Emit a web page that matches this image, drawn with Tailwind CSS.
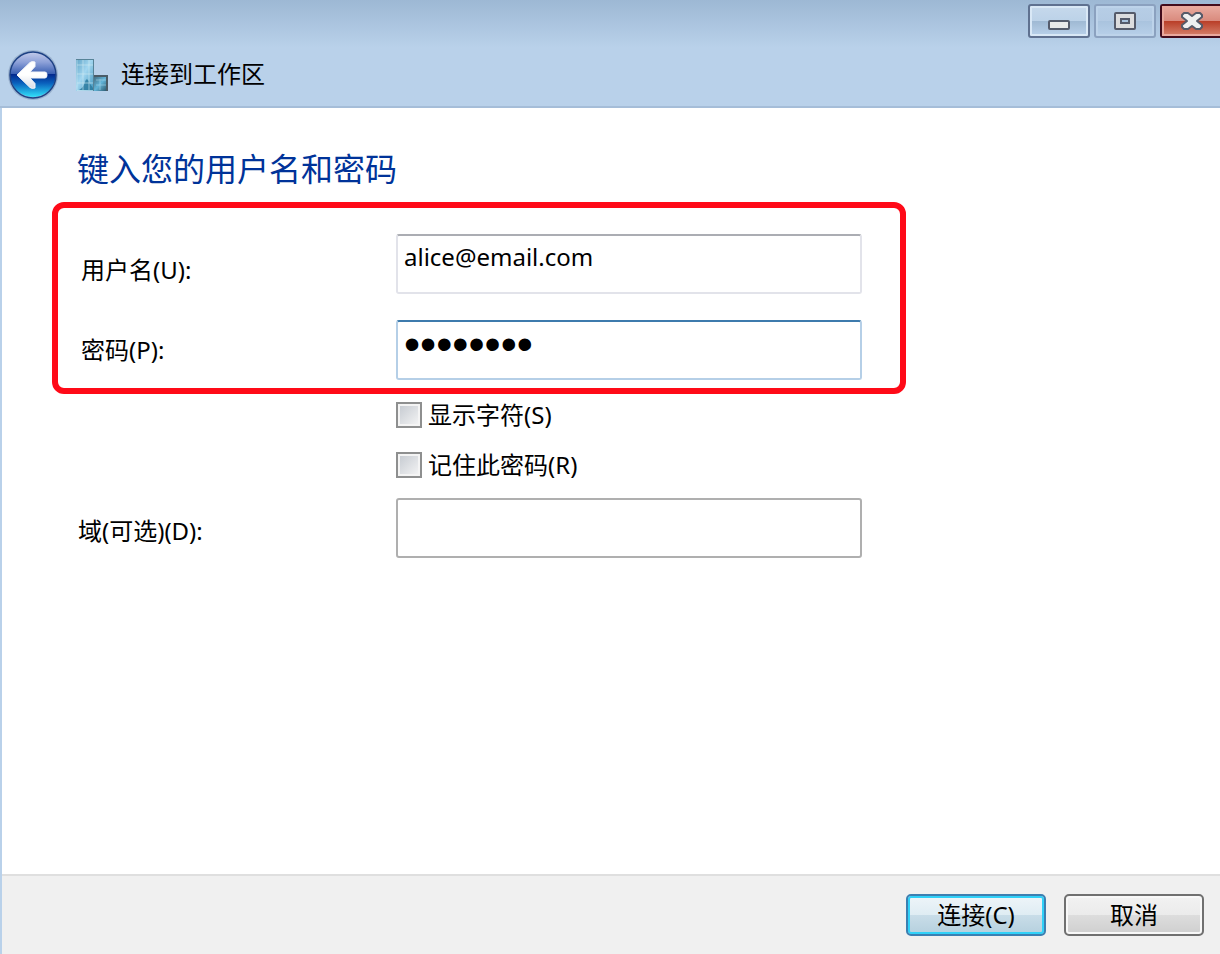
<!DOCTYPE html>
<html lang="zh-CN">
<head>
<meta charset="utf-8">
<title>连接到工作区</title>
<script src="https://cdn.jsdelivr.net/npm/@tailwindcss/browser@4"></script>
</head>
<body class="flex min-h-screen flex-col overflow-x-hidden bg-[#b9d1ea] font-['Noto_Sans','Noto_Sans_CJK_SC',sans-serif] text-2xl leading-8 text-black">

<header class="bg-linear-to-b from-[#9db8d4] to-[#b9d1ea] to-45% border-b-2 border-[#a5bdd8]">
  <div class="flex h-11 justify-end gap-1 pt-1">
    <button aria-label="最小化" class="flex h-[34px] w-[62px] justify-center rounded-[3px] border-2 border-[#5f7190] bg-[linear-gradient(#c6d9ec,#bcd2e8_50%,#9fb9d3_50%,#bad2eb)] inset-ring-2 inset-ring-[#d9e8f6]">
      <svg class="mt-3.5 h-[10px] w-[22px]" viewBox="0 0 22 10"><rect x="1" y="1" width="20" height="8" rx="1" fill="#e9e9e9" stroke="#555b6b" stroke-width="2"/></svg>
    </button>
    <button aria-label="最大化" class="flex h-[34px] w-[62px] justify-center rounded-[3px] border-2 border-[#8ba1bf] bg-[linear-gradient(#b7cee6,#b3cae3_50%,#a9c3de_50%,#b8d0e9)] inset-ring-2 inset-ring-[#bdd3ea]">
      <svg class="mt-1.5 h-[18px] w-[22px]" viewBox="0 0 22 18"><rect x="1" y="1" width="20" height="16" rx="1" fill="#dcdddf" stroke="#555b6b" stroke-width="2"/><rect x="7" y="7" width="8" height="4" fill="#a9c3de" stroke="#555b6b" stroke-width="2"/></svg>
    </button>
    <button aria-label="关闭" class="flex h-[34px] w-[60px] rounded-l-[3px] border-2 border-r-0 border-[#430c1c]">
      <span class="flex h-full w-full justify-center border-2 border-r-0 border-[#e9a89d] bg-[linear-gradient(#e7a79c,#d98a7d_50%,#b93e27_50%,#d27964)]">
        <svg class="mt-1 h-[18px] w-[22px]" viewBox="0 0 22 18"><path d="M3 1h4l4 3 4-3h4l2 2v2l-5 4 5 4v2l-2 2h-4l-4-3-4 3H3l-2-2v-2l5-4-5-4V3z" fill="#eeeff0" stroke="#565a69" stroke-width="2" stroke-linejoin="round"/></svg>
      </span>
    </button>
  </div>
  <div class="flex h-[62px] items-center pl-2">
    <button aria-label="返回" class="size-[50px]">
      <svg viewBox="0 0 50 50" class="size-full">
        <defs>
          <linearGradient id="top" x1="0" y1="0" x2="0" y2="1"><stop offset="0" stop-color="#c3cbea"/><stop offset=".45" stop-color="#8ca0d8"/><stop offset="1" stop-color="#3158ae"/></linearGradient>
          <linearGradient id="low" x1="0" y1="0" x2="0" y2="1"><stop offset="0" stop-color="#02268c"/><stop offset=".4" stop-color="#0a61bd"/><stop offset="1" stop-color="#31e1fb"/></linearGradient>
          <linearGradient id="arrow" x1="0" y1="0" x2="0" y2="1"><stop offset=".5" stop-color="#fff"/><stop offset="1" stop-color="#d9dde6"/></linearGradient>
        </defs>
        <circle cx="25" cy="25" r="25" fill="#8ba4c2" opacity=".7"/>
        <path d="M2 25a23 23 0 0 1 46 0z" fill="url(#top)"/>
        <path d="M2 24a23 23 0 0 0 46 0z" fill="url(#low)"/>
        <circle cx="25" cy="25" r="23" fill="none" stroke="#1d4184" stroke-width="1.500"/>
        <path d="M9 25L22 12.500q2-1.500 5-.5v4.500L22 22h15q2 0 2 3t-2 3H22l5 5.500V38q-3 1-5-.5z" fill="url(#arrow)" stroke="#f4f6fa" stroke-width="1"/>
      </svg>
    </button>
    <svg class="ml-[18px] h-8 w-8" viewBox="0 0 32 32" aria-hidden="true">
      <defs>
        <linearGradient id="glass" x1="0" y1="0" x2="1" y2="1"><stop offset="0" stop-color="#5fa3c6"/><stop offset=".45" stop-color="#a2d6f0"/><stop offset="1" stop-color="#3a93bd"/></linearGradient>
        <linearGradient id="annex" x1="0" y1="0" x2="1" y2="1"><stop offset="0" stop-color="#3f6579"/><stop offset=".5" stop-color="#62b4d8"/><stop offset="1" stop-color="#254f63"/></linearGradient>
      </defs>
      <path d="M0 0h18v32H0z" fill="url(#glass)"/>
      <path d="M3 31q5-3 6-8 1-4 3-2 2 4 5 8v2z" fill="#28789c" opacity=".8"/>
      <path d="M1 0v31.500H18M7 1v30M13 1v30M1 6h16M1 15h16M1 24h16" fill="none" stroke="#d1e9f2" opacity=".6"/>
      <path d="M17.500 0v32M0 .5h18" stroke="#568398"/>
      <path d="M18 16h14v16H18z" fill="url(#annex)"/>
      <path d="M18 17h14M31 16v16" stroke="#4a5c68" stroke-width="2"/>
      <path d="M20 21h10M20 26h10M24 20v11" stroke="#b5e0f2" opacity=".5"/>
    </svg>
    <h1 class="ml-[13px] pb-0.5">连接到工作区</h1>
  </div>
</header>

<form class="flex flex-1 flex-col border-l-2 border-[#b9d1ea] bg-white">
  <main class="flex-1 pl-[50px]">
    <h2 class="mt-10 ml-[25px] text-[32px] leading-[42px] text-[#003399]">键入您的用户名和密码</h2>
    <section class="mt-3 w-[854px] max-w-full rounded-xl border-6 border-[#ff0a18] pt-[26px] pb-2 pl-[23px]">
      <div class="flex items-center">
        <label for="user" class="w-[315px] pt-3">用户名(U):</label>
        <input id="user" type="text" value="alice@email.com" class="h-[60px] w-[466px] rounded-[3px] border-2 border-[#e2e3ea] border-t-[#abadb3] bg-white px-1.5 pb-4 outline-none">
      </div>
      <div class="mt-[26px] flex items-center">
        <label for="password" class="w-[315px]">密码(P):</label>
        <input id="password" type="password" value="password" class="h-[60px] w-[466px] rounded-[3px] border-2 border-[#b5cfe7] border-t-[#3d7bad] bg-white px-1.5 pb-3 font-['Liberation_Sans',sans-serif] text-[46px] outline-none">
      </div>
    </section>
    <div class="mt-[5px] ml-[344px] flex flex-col gap-[18px]">
      <label class="flex h-8 items-center gap-1.5"><input type="checkbox" class="size-[26px] appearance-none border-2 border-[#8e8f8f] bg-linear-to-br from-[#c3c8cf] to-[#f6f6f6] inset-ring-2 inset-ring-[#f4f4f4]">显示字符(S)</label>
      <label class="flex h-8 items-center gap-1.5"><input type="checkbox" class="size-[26px] appearance-none border-2 border-[#8e8f8f] bg-linear-to-br from-[#c3c8cf] to-[#f6f6f6] inset-ring-2 inset-ring-[#f4f4f4]">记住此密码(R)</label>
    </div>
    <div class="mt-[17px] ml-[26px] flex items-center">
      <label for="domain" class="w-[318px] pt-1.5">域(可选)(D):</label>
      <input id="domain" type="text" class="h-[60px] w-[466px] rounded-[3px] border-2 border-[#afafaf] bg-white px-1.5 pb-4 outline-none">
    </div>
  </main>
  <footer class="flex h-20 justify-end gap-[18px] border-t-2 border-[#dfdfdf] bg-[#f0f0f0] pt-[18px] pr-4">
    <button type="submit" class="h-[42px] w-[140px] rounded-[5px] border-2 border-[#3c7fb1] bg-[linear-gradient(#eef5f9,#dfecf3_50%,#c9dde8_50%,#b5d0de)] inset-ring-2 inset-ring-[#30d1f8]">连接(C)</button>
    <button type="button" class="h-[42px] w-[140px] rounded-[5px] border-2 border-[#707070] bg-[linear-gradient(#f2f2f2,#ebebeb_50%,#dddddd_50%,#cfcfcf)] inset-ring-2 inset-ring-[#f8f8f8]">取消</button>
  </footer>
</form>
</body>
</html>
